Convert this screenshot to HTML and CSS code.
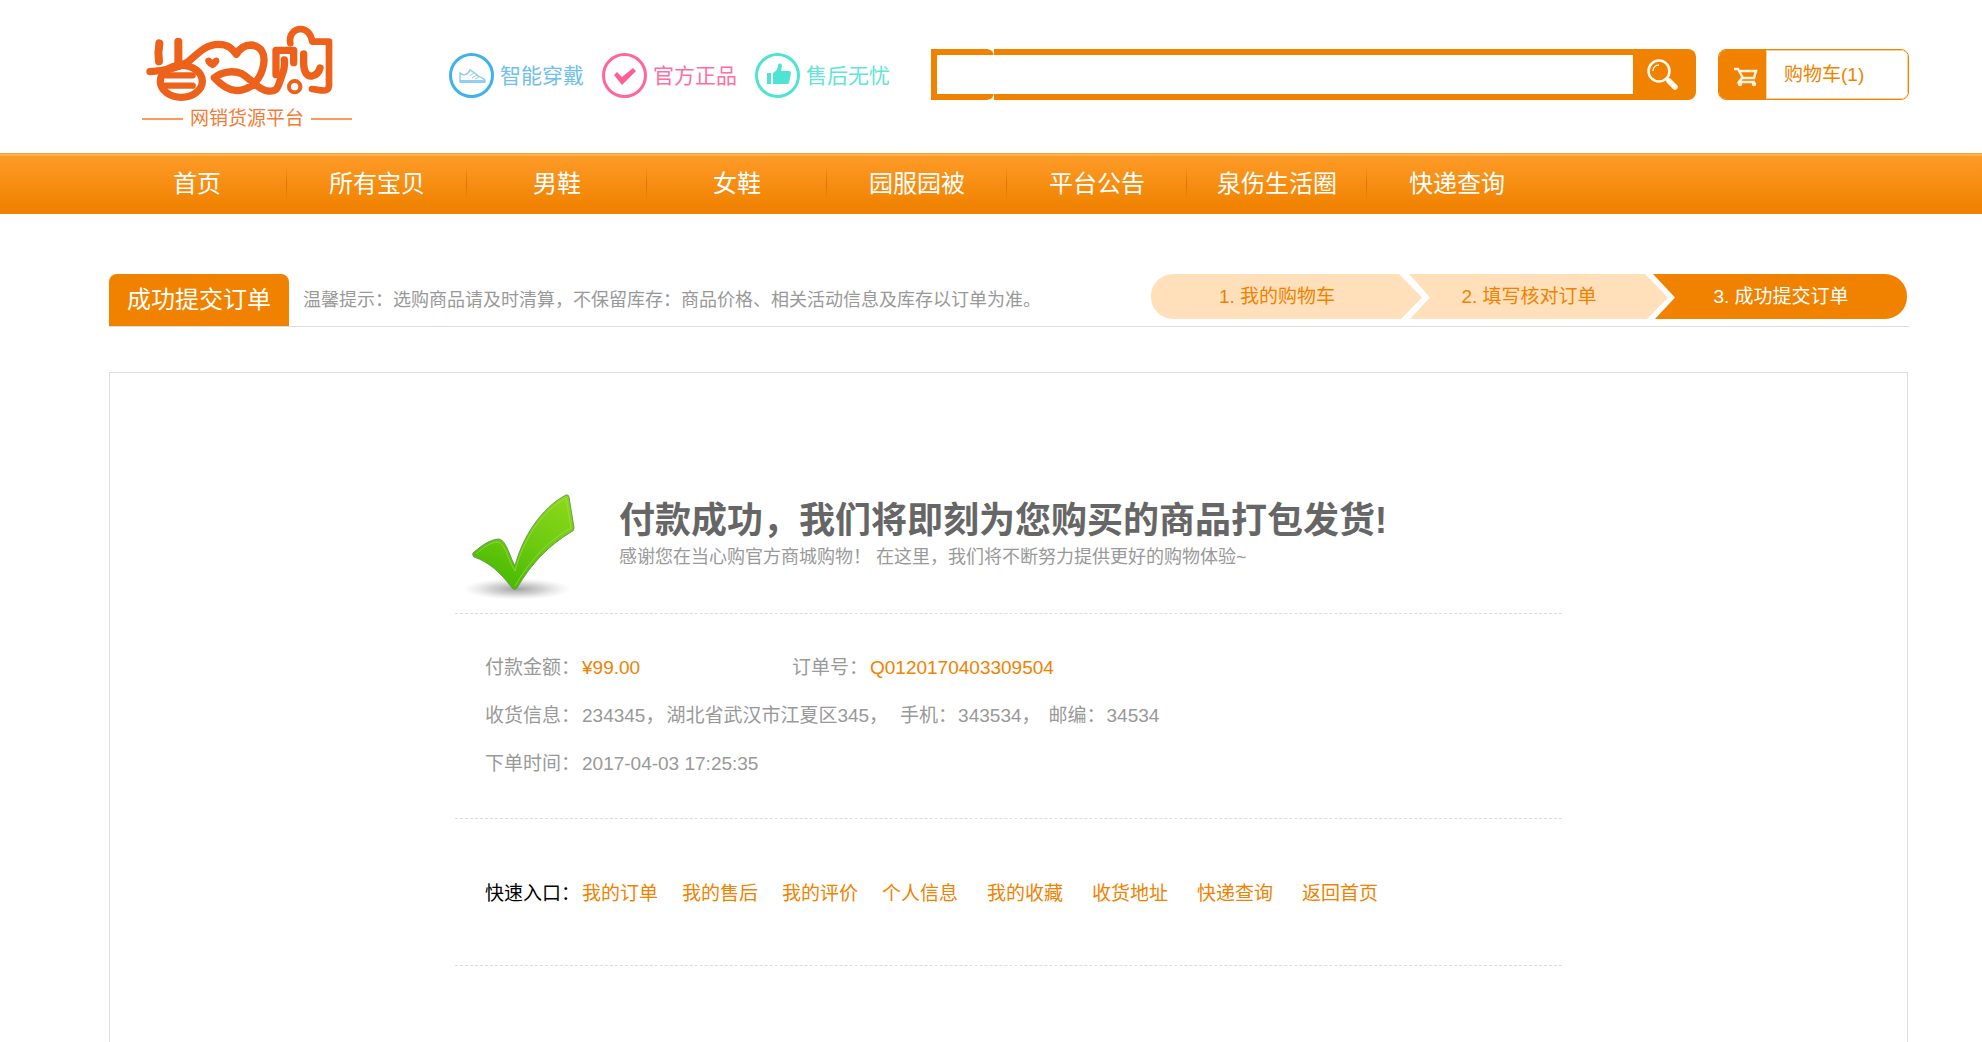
FILE: index.html
```html
<!DOCTYPE html>
<html lang="zh-CN">
<head>
<meta charset="utf-8">
<meta name="viewport" content="width=device-width, initial-scale=1">
<title>成功提交订单</title>
<link rel="stylesheet" href="styles.css">
</head>
<body>
<header class="header">
  <a class="logo" href="#" aria-label="首页">
    <svg class="logo-mark" viewBox="126 70 630 240" fill="none" stroke="#ed611a" stroke-width="22" stroke-linecap="round" stroke-linejoin="round" aria-hidden="true">
      <path stroke-width="24" d="M178 128C175 146 174 162 177 182M235 123V196"/>
      <path d="M150 213C205 210 240 198 264 184C300 152 320 131 356 131C386 131 398 146 409 161C420 142 436 133 453 133C484 136 496 160 491 190C484 238 450 269 410 270C382 268 362 252 343 231C364 213 400 208 425 219C462 242 474 266 503 271C531 274 533 262 541 238C552 208 555 198 553 178"/>
      <ellipse cx="244" cy="242" rx="63" ry="48"/>
      <path stroke-width="19" d="M198 224H278M198 255H278"/>
      <path fill="#ed611a" stroke-width="6" d="M337 200C324 194 314 181 321 175C328 171 335 176 337 184C339 176 348 171 354 176C359 183 348 195 337 200Z"/>
      <path d="M528 222V149H581V186"/>
      <path stroke-width="20" d="M571 128C566 101 583 85 602 85C622 86 633 102 637 123H687V252C687 268 678 271 664 269L636 265"/>
      <path d="M611 160V190C612 215 621 228 636 226C651 223 657 214 660 202"/>
      <circle cx="584" cy="258" r="17" stroke-width="12"/>
    </svg>
    <span class="logo-caption">网销货源平台</span>
  </a>
  <ul class="features">
    <li class="feature feature-blue">
      <svg viewBox="0 0 45 45" aria-hidden="true"><circle cx="22.500" cy="22.500" r="21" fill="none" stroke="#3fb2ec" stroke-width="3"/><path d="M11 20V29H36V27C33 24 29 24 27 21L21 17C19 22 14 23 11 20Z" fill="#fff" stroke="#93cdf2" stroke-width="1.500"/><path d="M11 27H36V30H11Z" fill="#93cdf2"/><path d="M21 23L26 19M23 25L28 22M26 26L30 24" stroke="#93cdf2"/></svg>
      <span>智能穿戴</span>
    </li>
    <li class="feature feature-pink">
      <svg viewBox="0 0 45 45" aria-hidden="true"><circle cx="22.500" cy="22.500" r="21" fill="none" stroke="#ff6699" stroke-width="3"/><path d="M12 22L15 19L20 24L31 15L34 18L20 32Z" fill="#ff5f96"/></svg>
      <span>官方正品</span>
    </li>
    <li class="feature feature-mint">
      <svg viewBox="0 0 45 45" aria-hidden="true"><circle cx="22.500" cy="22.500" r="21" fill="none" stroke="#4fe3d4" stroke-width="3"/><path d="M12 20H16V31H12ZM18 20C21 18 23 16 23 12C24 10 27 10 27 13L26 18H34Q36 18 36 20L34 30Q34 31 32 31H18Z" fill="#4fe3d4"/></svg>
      <span>售后无忧</span>
    </li>
  </ul>
  <form class="search" role="search">
    <input class="search-input" type="text" aria-label="搜索商品">
    <button class="search-button" type="submit" aria-label="搜索">
      <svg viewBox="0 0 32 32" fill="none" stroke="#fff8ee" aria-hidden="true"><circle cx="12" cy="12" r="10.500" stroke-width="2.500"/><path d="M6 12C6 8 9 6 12 6" stroke-width="1.500"/><path d="M19 19L22 22" stroke-width="2.500"/><path d="M22 22L28 28" stroke-width="5.500" stroke-linecap="round"/></svg>
    </button>
  </form>
  <a class="cart" href="#">
    <span class="cart-icon"><svg viewBox="0 0 24 20" fill="none" stroke="#fff2df" stroke-width="2.500" aria-hidden="true"><path d="M0 2H4L9 11H20L22 4H6M8 11L5 15H21"/><circle cx="6" cy="17" r="1.500" fill="#fff2df" stroke-width="1.500"/><circle cx="20" cy="17" r="1.500" fill="#fff2df" stroke-width="1.500"/></svg></span>
    <span class="cart-label">购物车(1)</span>
  </a>
</header>
<nav class="nav">
  <a href="#">首页</a>
  <a href="#">所有宝贝</a>
  <a href="#">男鞋</a>
  <a href="#">女鞋</a>
  <a href="#">园服园被</a>
  <a href="#">平台公告</a>
  <a href="#">泉伤生活圈</a>
  <a href="#">快递查询</a>
</nav>
<main class="main">
  <div class="title-bar">
    <h1 class="title">成功提交订单</h1>
    <p class="hint">温馨提示：选购商品请及时清算，不保留库存：商品价格、相关活动信息及库存以订单为准。</p>
    <ol class="steps">
      <li class="step step-first">1. 我的购物车</li>
      <li class="step step-middle">2. 填写核对订单</li>
      <li class="step step-current">3. 成功提交订单</li>
    </ol>
  </div>
  <section class="panel">
    <div class="result">
      <svg class="result-tick" viewBox="0 0 113 110" aria-hidden="true">
        <defs>
          <linearGradient id="leaf" x1="0.800" y1="0" x2="0.300" y2="1"><stop offset="0" stop-color="#8ad71a"/><stop offset="0.500" stop-color="#6cca10"/><stop offset="1" stop-color="#45b900"/></linearGradient>
          <radialGradient id="shade"><stop offset="0" stop-color="#888" stop-opacity="0.800"/><stop offset="0.500" stop-color="#aaa" stop-opacity="0.500"/><stop offset="1" stop-color="#ccc" stop-opacity="0"/></radialGradient>
        </defs>
        <ellipse cx="55" cy="96" rx="54" ry="11" fill="url(#shade)"/>
        <path d="M11 60C19 53 27 47 36 46C44 46 47 62 53 73C60 45 79 15 104 2Q106 1 107 4L112 35Q112 38 109 39C86 53 69 71 55 95Q53 98 50 95C39 80 27 69 12 64Q10 62 11 60Z" fill="url(#leaf)" stroke="#6d9a55"/>
        <path d="M14 61C22 54 29 49 36 49C43 50 46 67 53 78C61 47 79 19 104 5L109 35C84 49 67 69 53 93" fill="none" stroke="#a5e553" stroke-opacity="0.600"/>
      </svg>
      <div>
        <h2 class="result-title">付款成功，我们将即刻为您购买的商品打包发货!</h2>
        <p class="result-text">感谢您在当心购官方商城购物！ 在这里，我们将不断努力提供更好的购物体验~</p>
      </div>
    </div>
    <dl class="details">
      <div class="detail-row">
        <div class="pair pair-first"><dt>付款金额：</dt><dd class="accent">¥99.00</dd></div>
        <div class="pair"><dt class="medium">订单号：</dt><dd class="accent">Q0120170403309504</dd></div>
      </div>
      <div class="detail-row">
        <div class="pair"><dt>收货信息：</dt><dd class="address"><span>234345，</span><span>湖北省武汉市江夏区345，</span></dd></div>
        <div class="pair extra"><dt class="short">手机：</dt><dd>343534，</dd></div>
        <div class="pair extra"><dt class="short">邮编：</dt><dd>34534</dd></div>
      </div>
      <div class="detail-row">
        <div class="pair"><dt>下单时间：</dt><dd>2017-04-03 17:25:35</dd></div>
      </div>
    </dl>
    <div class="shortcuts">
      <span class="shortcuts-label">快速入口：</span>
      <div class="links">
        <a href="#">我的订单</a>
        <a href="#">我的售后</a>
        <a href="#">我的评价</a>
      </div>
      <div class="links links-wide">
        <a href="#">个人信息</a>
        <a href="#">我的收藏</a>
        <a href="#">收货地址</a>
        <a href="#">快递查询</a>
        <a href="#">返回首页</a>
      </div>
    </div>
  </section>
</main>
</body>
</html>
```

FILE: styles.css
```css
:root {
  --orange: #f08200;
  --pale: #ffe0bb;
  --line: #ddd;
  --grey: #999;
}

* {
  box-sizing: border-box;
}

body {
  margin: 0;
  min-height: 100vh;
  display: flex;
  flex-direction: column;
  background: #fff;
  color: #000;
  font-family: "Liberation Sans", "Noto Sans CJK SC", sans-serif;
  font-size: 19px;
}

h1, h2, p, ul, ol, dl, dd {
  margin: 0;
  padding: 0;
}

ul, ol {
  list-style: none;
}

a {
  color: var(--orange);
  text-decoration: none;
}

/* Header */
.header {
  display: flex;
  align-items: center;
  height: 153px;
  padding: 0 73px 4px 142px;
}

.logo {
  width: 210px;
  flex: none;
  display: flex;
  flex-direction: column;
  margin-top: 8px;
  color: #f47b35;
}

.logo-mark {
  width: 210px;
  height: 80px;
}

.logo-caption {
  display: flex;
  align-items: center;
  justify-content: space-between;
  line-height: 30px;
}

.logo-caption::before,
.logo-caption::after {
  content: "";
  width: 41px;
  height: 2px;
  background: #fb9a5c;
}

.features {
  display: flex;
  margin-left: 97px;
  padding-top: 2px;
}

.feature {
  display: flex;
  align-items: center;
  gap: 6px;
  width: 153px;
  font-size: 21px;
  line-height: 44px;
  white-space: nowrap;
}

.feature svg {
  width: 45px;
  height: 45px;
  flex: none;
}

.feature-blue { color: #6fc0ee; }
.feature-pink { color: #ff6ea0; }
.feature-mint { color: #62e5d6; }

.search {
  position: relative;
  display: flex;
  flex: 1;
  height: 51px;
  margin: 0 22px 0 23px;
  background: var(--orange);
  border-radius: 0 8px 8px 0;
}

/* rounded joint in the frame of the search box */
.search::before,
.search::after {
  content: "";
  position: absolute;
  left: 57px;
  width: 6px;
  height: 6px;
}

.search::before {
  top: 0;
  background: radial-gradient(circle at 0 100%, transparent 5px, #fff 6px);
}

.search::after {
  bottom: 0;
  background: radial-gradient(circle at 0 0, transparent 5px, #fff 6px);
}

.search-input {
  flex: 1;
  min-width: 0;
  margin: 6px 0 6px 6px;
  padding: 0 12px;
  border: 0;
  outline: 0;
  background: #fff;
  font: inherit;
}

.search-button {
  display: flex;
  align-items: center;
  justify-content: center;
  width: 63px;
  padding: 0 4px 0 0;
  border: 0;
  background: none;
}

.search-button svg {
  width: 32px;
  height: 32px;
}

.cart {
  display: flex;
  flex: none;
  width: 191px;
  height: 51px;
  border: 1px solid var(--orange);
  border-radius: 8px;
  overflow: hidden;
}

.cart-icon {
  display: flex;
  align-items: center;
  justify-content: center;
  width: 47px;
  padding: 4px 0 0 6px;
  background: var(--orange);
}

.cart-icon svg {
  width: 24px;
  height: 20px;
}

.cart-label {
  flex: 1;
  padding-left: 17px;
  border: 1px solid #fad09b;
  border-radius: 0 6px 6px 0;
  line-height: 47px;
}

/* Navigation */
.nav {
  display: flex;
  height: 61px;
  padding-left: 107px;
  border-top: 1px solid #fb9f36;
  background: linear-gradient(#ffb54c 0 2px, #fe9b28 2px, #f08200 90%);
}

.nav a {
  width: 180px;
  color: #fff;
  font-size: 24px;
  line-height: 60px;
  text-align: center;
  white-space: nowrap;
  background: linear-gradient(transparent 20%, #d87400 50%, transparent 78%) right / 1px 100% no-repeat;
}

.nav a:last-child {
  background: none;
}

/* Content */
.main {
  flex: 1;
  display: flex;
  flex-direction: column;
  padding: 60px 73px 0 109px;
}

.title-bar {
  display: flex;
  border-bottom: 1px solid var(--line);
}

.title {
  width: 180px;
  height: 52px;
  border-radius: 8px 8px 0 0;
  background: var(--orange);
  color: #fff;
  font-size: 24px;
  font-weight: 400;
  line-height: 52px;
  text-align: center;
}

.hint {
  flex: 1;
  padding-left: 14px;
  color: var(--grey);
  font-size: 18px;
  line-height: 52px;
  white-space: nowrap;
}

.steps {
  display: flex;
  width: 756px;
  height: 45px;
  margin-right: 2px;
  border-radius: 22px;
  overflow: hidden;
  isolation: isolate;
}

.step {
  position: relative;
  flex: 1;
  color: var(--orange);
  line-height: 45px;
  text-align: center;
  white-space: nowrap;
}

/* arrow-shaped plate behind each step */
.step::before {
  content: "";
  position: absolute;
  z-index: -1;
  top: 0;
  bottom: 0;
  background: var(--pale);
}

.step-first::before {
  left: 0;
  right: -19px;
  clip-path: polygon(0 0, calc(100% - 23px) 0, 100% 52%, calc(100% - 21px) 100%, 0 100%);
}

.step-middle::before {
  left: 6px;
  right: -13px;
  clip-path: polygon(0 0, calc(100% - 23px) 0, 100% 52%, calc(100% - 21px) 100%, 1px 100%, 21px 52%);
}

.step-current::before {
  left: -2px;
  right: 0;
  background: var(--orange);
  clip-path: polygon(0 0, 100% 0, 100% 100%, 2px 100%, 22px 52%);
}

.step-current {
  color: #fff;
}

.panel {
  flex: 1;
  margin: 45px 1px 0 0;
  padding: 120px 345px 76px;
  border: 1px solid var(--line);
  border-bottom: 0;
}

.result {
  display: flex;
  gap: 44px;
  height: 121px;
  padding-left: 7px;
  border-bottom: 1px dashed var(--line);
}

.result-tick {
  width: 113px;
  height: 110px;
  flex: none;
}

.result-title {
  color: #666;
  font-size: 36px;
  line-height: 56px;
  white-space: nowrap;
}

.result-text {
  color: var(--grey);
  font-size: 18px;
  line-height: 16px;
  white-space: nowrap;
}

.details {
  padding: 30px 0 30px 30px;
  border-bottom: 1px dashed var(--line);
  color: var(--grey);
}

.detail-row {
  display: flex;
  line-height: 48px;
  white-space: nowrap;
}

.pair {
  display: flex;
}

.pair-first {
  width: 307px;
}

dt {
  width: 97px;
}

dt.medium {
  width: 78px;
}

dt.short {
  width: 58px;
}

.address {
  display: flex;
  gap: 2px;
}

.extra {
  margin-left: 12px;
}

.extra + .extra {
  margin-left: 8px;
}

.accent {
  color: var(--orange);
}

.shortcuts {
  display: flex;
  padding: 51px 0 47px 30px;
  border-bottom: 1px dashed var(--line);
  line-height: 48px;
  white-space: nowrap;
}

.shortcuts-label {
  width: 97px;
}

.links {
  display: flex;
  gap: 24px;
}

.links-wide {
  gap: 29px;
  margin-left: 24px;
}
```
